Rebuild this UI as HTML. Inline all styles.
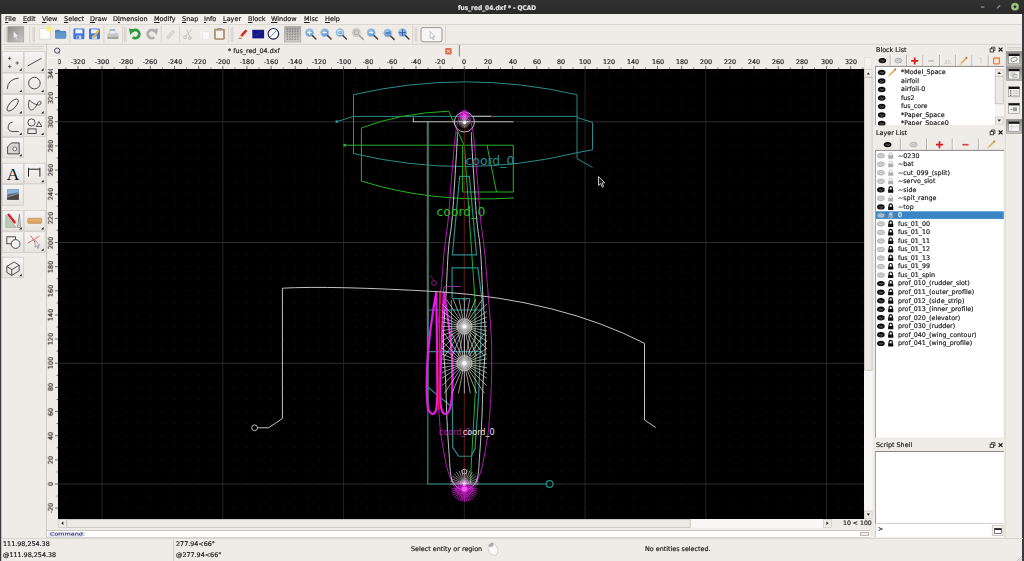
<!DOCTYPE html>
<html><head><meta charset="utf-8"><title>fus_red_04.dxf * - QCAD</title>
<style>
html,body{margin:0;padding:0;}
.t,.rl,.rv{will-change:transform;-webkit-text-stroke:0.18px currentColor;}
body{width:1024px;height:561px;overflow:hidden;background:#efebe7;position:relative;font-family:"DejaVu Sans","Liberation Sans",sans-serif;font-size:6.5px;color:#1a1a1a;line-height:1;}
.a{position:absolute;}
.t{position:absolute;white-space:nowrap;}
#title{left:0;top:0;width:1024px;height:13.6px;background:linear-gradient(#323232,#2a2a2a);}
#title .t{color:#e4e4e4;font-family:"DejaVu Sans Condensed","DejaVu Sans","Liberation Sans",sans-serif;font-weight:bold;font-size:6.5px;top:4.6px;left:457.8px;}
#menu .t{top:15.5px;font-size:6.5px;color:#1a1a1a;}
u{text-decoration:underline;text-underline-offset:0.6px;text-decoration-thickness:0.5px;}
.sep{position:absolute;width:1px;background:#cfcac4;border-right:1px solid #fbfaf9;}
.rl{position:absolute;font-size:6.4px;color:#222;white-space:nowrap;transform:translateX(-50%);top:58.5px;}
.rv{position:absolute;font-size:6.4px;color:#222;white-space:nowrap;left:51.2px;transform:translate(-50%,-50%) rotate(-90deg);}
.row{position:absolute;left:897px;font-size:6.5px;white-space:nowrap;}
</style></head><body>
<!-- TITLE BAR -->
<div id="title" class="a"><div class="t">fus_red_04.dxf * - QCAD</div>
<svg class="a" style="left:930px;top:0" width="94" height="14" viewBox="930 0 94 14">
<rect x="981" y="6.6" width="3.4" height="0.9" fill="#b8b8b8"/>
<path d="M997 8.4L1000.2 5.2" stroke="#8e8e8e" stroke-width="1.3" fill="none"/>
<circle cx="1015" cy="6.7" r="3.9" fill="#8dad68"/><circle cx="1015" cy="6.7" r="2.7" fill="none" stroke="#a9c58a" stroke-width="1.1"/>
<circle cx="1015" cy="6.7" r="1.2" fill="#2c2c2c"/>
</svg></div>
<div class="a" style="left:0;top:14px;width:1px;height:547px;background:#3a3a3a"></div><div class="a" style="left:1px;top:14px;width:1px;height:547px;background:#c2bfbb"></div>
<div class="a" style="left:1022px;top:14px;width:2px;height:31px;background:#3a3a3a"></div>
<!-- MENU -->
<div class="a" style="left:2px;top:14px;width:1020px;height:10.3px;background:#f2f0ed;border-bottom:0.6px solid #dad6d0"></div>
<div id="menu">
<div class="t" style="left:5px"><u>F</u>ile</div>
<div class="t" style="left:23px"><u>E</u>dit</div>
<div class="t" style="left:41.5px"><u>V</u>iew</div>
<div class="t" style="left:63.5px"><u>S</u>elect</div>
<div class="t" style="left:89.5px"><u>D</u>raw</div>
<div class="t" style="left:113px">D<u>i</u>mension</div>
<div class="t" style="left:153.5px"><u>M</u>odify</div>
<div class="t" style="left:181.5px"><u>S</u>nap</div>
<div class="t" style="left:204px"><u>I</u>nfo</div>
<div class="t" style="left:222.5px"><u>L</u>ayer</div>
<div class="t" style="left:247.5px"><u>B</u>lock</div>
<div class="t" style="left:271px"><u>W</u>indow</div>
<div class="t" style="left:303.5px"><u>M</u>isc</div>
<div class="t" style="left:324.5px"><u>H</u>elp</div>
</div>
<!-- TOOLBAR -->
<svg id="toolbar" class="a" style="left:0;top:24px" width="1024" height="21" viewBox="0 24 1024 21">
<defs>
<linearGradient id="pr" x1="0" y1="0" x2="1" y2="1"><stop offset="0" stop-color="#8c8a88"/><stop offset="1" stop-color="#cbc8c5"/></linearGradient>
<linearGradient id="pg" x1="0" y1="0" x2="0" y2="1"><stop offset="0" stop-color="#a8a6a3"/><stop offset="1" stop-color="#d2cfcb"/></linearGradient>
<radialGradient id="lens" cx="0.4" cy="0.35" r="0.7"><stop offset="0" stop-color="#a9cdf2"/><stop offset="1" stop-color="#4b86cc"/></radialGradient>
<g id="mag"><circle cx="0" cy="0" r="3.9" fill="url(#lens)" stroke="#a9bfd8" stroke-width="1"/><path d="M3 3L6.4 6.4" stroke="#454545" stroke-width="1.5" stroke-linecap="round"/></g>
<g id="hdl"><path d="M0 27V42M1.6 27V42" stroke="#c9c4be" stroke-width="0.7"/></g>
</defs>
<path d="M1.5 44.3H1022.5" stroke="#d6d2cc" stroke-width="1"/>
<use href="#hdl" x="5"/>
<rect x="7.8" y="26.7" width="16" height="15.3" fill="url(#pr)" stroke="#9a9794" stroke-width="0.6"/>
<path d="M13.6 31.2V38.4L15.3 36.9L16.5 39.6L17.5 39.1L16.3 36.5L18.4 36.4Z" fill="#f0f0f0" stroke="#b4b2b0" stroke-width="0.4"/>
<path d="M29.7 26V43M69.8 26V43M103.9 26V43M122.6 26V43M161.2 26V43M179.7 26V43M228.6 26V43M412.7 26V43M445.5 26V43" stroke="#d5d0ca" stroke-width="0.9"/>
<use href="#hdl" x="33"/>
<!-- new -->
<circle cx="49" cy="29.5" r="3.2" fill="#f2ef7a"/>
<path d="M39.6 28.6H47L50.4 31V39.2H39.6Z" fill="#fbfbf8" stroke="#d2d0c6" stroke-width="0.7"/>
<circle cx="48.6" cy="29.6" r="2" fill="#f6f38a" opacity="0.9"/>
<!-- open -->
<path d="M55 31.2Q55 29.8 56.4 29.8H59.6L60.8 31H65Q66.2 31 66.2 32.2V37.2Q66.2 38.5 64.8 38.5H56.4Q55 38.5 55 37.2Z" fill="#4f8abf"/>
<path d="M55 33Q60 31.6 66.2 32.6V37.2Q66.2 38.5 64.8 38.5H56.4Q55 38.5 55 37.2Z" fill="#5c98cb"/>
<!-- save -->
<rect x="73.4" y="28.6" width="11" height="10.6" rx="1.2" fill="#3f74d8"/>
<rect x="75.4" y="29.4" width="7" height="4" fill="#eef2fb"/>
<rect x="76.4" y="35.6" width="5" height="3.6" fill="#c9d6f2"/><rect x="77.2" y="36.2" width="1.6" height="2.6" fill="#3f74d8"/>
<!-- save as -->
<rect x="89" y="28.6" width="11" height="10.6" rx="1.2" fill="#3f74d8"/>
<rect x="91" y="29.4" width="7" height="4" fill="#eef2fb"/>
<rect x="92" y="35.6" width="5" height="3.6" fill="#c9d6f2"/>
<path d="M92.5 37L98.6 29.4L100 30.5L94 38Z" fill="#e8b84a" stroke="#b0883a" stroke-width="0.3"/>
<!-- print -->
<path d="M109.6 29H115.2V33H109.6Z" fill="#9fb6d8"/>
<path d="M107.4 34.5Q107.4 33 109 33H116.6Q118.4 33 118.4 34.5V37.6H107.4Z" fill="#c6c5c2"/>
<rect x="107.4" y="37" width="11" height="2" fill="#a3a29f"/>
<rect x="110" y="31" width="5" height="2.6" fill="#e9eef6"/>
<use href="#hdl" x="124.4"/>
<!-- undo -->
<path d="M132.6 37.2A4.1 4.1 0 1 0 132.3 31.2" fill="none" stroke="#2f9c3c" stroke-width="2.8"/>
<path d="M129 28.6L135.4 29.4L130.2 35Z" fill="#2f9c3c"/>
<!-- redo -->
<path d="M154.4 37.2A4.1 4.1 0 1 1 154.7 31.2" fill="none" stroke="#b0afad" stroke-width="2.8"/>
<path d="M158 28.6L151.6 29.4L156.8 35Z" fill="#b0afad"/>
<!-- edit (disabled) -->
<path d="M166.4 37.4L172.6 30.2L174.6 31.8L168.4 38.8Z" fill="#dddbd8" stroke="#b8b6b3" stroke-width="0.6"/>
<!-- cut disabled -->
<path d="M186 36L191.6 29.6M189.4 36.6L187.2 30" stroke="#bdbbb8" stroke-width="0.8" fill="none"/>
<circle cx="185.2" cy="37.4" r="1.4" fill="none" stroke="#b4b2af" stroke-width="0.8"/><circle cx="190" cy="38" r="1.4" fill="none" stroke="#b4b2af" stroke-width="0.8"/>
<!-- copy disabled -->
<rect x="199" y="30" width="6.5" height="8" fill="#f4f2ef" stroke="#e2dfdb" stroke-width="0.5"/><rect x="202.5" y="31.6" width="6.8" height="8" fill="#f8f7f5" stroke="#e2dfdb" stroke-width="0.5"/>
<!-- paste -->
<rect x="214.4" y="29" width="10.2" height="10.4" rx="0.8" fill="#b99a72" stroke="#8e7454" stroke-width="0.5"/>
<rect x="216" y="30.6" width="7" height="7.6" fill="#f3f2ee"/>
<rect x="217.4" y="28" width="4.2" height="2.2" rx="0.6" fill="#9a9894"/>
<use href="#hdl" x="231.2"/>
<!-- red pencil -->
<path d="M239.4 37.8L240.4 35L245.4 29.4L247.4 31L242.4 36.8Z" fill="#d82a2a"/>
<path d="M239 38.4L240.4 35L242.4 36.8Z" fill="#f0d0a0"/>
<path d="M238.6 38.6H242" stroke="#803030" stroke-width="0.5"/>
<!-- blue rect -->
<rect x="252.3" y="29.8" width="11.8" height="8.6" fill="#17178c"/>
<path d="M254 36L262 32" stroke="#4a4ab8" stroke-width="0.5" stroke-dasharray="1 1"/>
<!-- circle slash -->
<circle cx="273.4" cy="33.8" r="5.3" fill="#fbfbfb" stroke="#1b1b4a" stroke-width="1.1"/>
<path d="M270 37.2L276.8 30.4" stroke="#6a74c8" stroke-width="0.9"/>
<!-- grid pressed -->
<rect x="284.7" y="26.7" width="16.1" height="15.3" fill="url(#pg)" stroke="#9a9794" stroke-width="0.6"/>
<path d="M286.5 29.2H299.4M286.5 31.8H299.4M286.5 34.4H299.4M286.5 37H299.4M286.5 39.6H299.4M287.6 28V40.8M290.2 28V40.8M292.8 28V40.8M295.4 28V40.8M298 28V40.8" stroke="#7d7b79" stroke-width="0.7" stroke-dasharray="1.3 1.3"/>
<!-- zoom icons -->
<use href="#mag" x="309.5" y="32.6"/><rect x="307.4" y="32.1" width="4.2" height="1.1" fill="#fff"/><rect x="309" y="30.5" width="1.1" height="4.2" fill="#fff"/>
<use href="#mag" x="324.7" y="32.6"/><rect x="322.6" y="32.1" width="4.2" height="1.1" fill="#fff"/>
<use href="#mag" x="340" y="32.6"/><rect x="337.8" y="30.6" width="4.4" height="3.8" fill="none" stroke="#eaf2fb" stroke-width="0.7"/>
<g opacity="0.55"><circle cx="356.4" cy="32.6" r="4" fill="#b9b7b4" stroke="#a3a19e" stroke-width="0.9"/><path d="M359.4 35.6L363.2 39.4" stroke="#6a6a6a" stroke-width="1.7" stroke-linecap="round"/><rect x="354.4" y="30.8" width="4" height="3.6" fill="none" stroke="#777" stroke-width="0.7"/></g>
<use href="#mag" x="371.2" y="32.6"/><path d="M369 32.6H373L371.6 31.2M373 32.6L371.6 34" stroke="#fff" stroke-width="0.8" fill="none"/>
<rect x="382.8" y="28" width="9.4" height="8.4" fill="#f7f7f7" stroke="#dcdad6" stroke-width="0.5"/>
<use href="#mag" x="387.7" y="33"/><rect x="385.6" y="32" width="4.2" height="2" fill="#3d72b8" opacity="0.7"/>
<use href="#mag" x="402.5" y="32.6"/><path d="M402.5 29.2V36M399.1 32.6H405.9" stroke="#2d5fa8" stroke-width="0.9"/>
<use href="#hdl" x="415.2"/>
<rect x="421" y="27.6" width="21" height="14.2" rx="2" fill="#f7f6f4" stroke="#8f8d8a" stroke-width="0.9"/>
<path d="M430.2 31.4V38.6L431.9 37.1L433.1 39.8L434.1 39.3L432.9 36.7L435 36.6Z" fill="#fdfdfd" stroke="#8a8a8a" stroke-width="0.5"/>
</svg>
<!-- LEFT TOOLS -->
<svg id="ltools" class="a" style="left:0;top:44px" width="47" height="494" viewBox="0 44 47 494">
<defs><linearGradient id="bt" x1="0" y1="0" x2="0" y2="1"><stop offset="0" stop-color="#f6f5f3"/><stop offset="1" stop-color="#e7e4e0"/></linearGradient></defs>
<path d="M4 46.6H44M4 48.8H44" stroke="#cdc8c2" stroke-width="0.7"/>
<rect x="2.2" y="51.7" width="21.1" height="20.6" fill="url(#bt)" stroke="#cbc7c1" stroke-width="0.7"/>
<path d="M21.7 68.30000000000001V70.70000000000002H19.3Z" fill="#111"/>
<path d="M9.7 56.7v3.4m-1.7 -1.7h3.4M17.2 61.300000000000004v3.4m-1.7 -1.7h3.4M9.7 64.9v3.4m-1.7 -1.7h3.4" stroke="#333" stroke-width="0.7" fill="none"/>
<rect x="24.1" y="51.7" width="21.1" height="20.6" fill="url(#bt)" stroke="#cbc7c1" stroke-width="0.7"/>
<path d="M43.6 68.30000000000001V70.70000000000002H41.2Z" fill="#111"/>
<path d="M27.700000000000003 65.9L41.5 58.300000000000004" stroke="#3c3c3c" stroke-width="0.9" fill="none"/>
<rect x="2.2" y="73.1" width="21.1" height="20.6" fill="url(#bt)" stroke="#cbc7c1" stroke-width="0.7"/>
<path d="M21.7 89.69999999999999V92.1H19.3Z" fill="#111"/>
<path d="M7.2 89.1Q7.7 79.1 18.7 78.1" stroke="#3c3c3c" stroke-width="0.9" fill="none"/>
<rect x="24.1" y="73.1" width="21.1" height="20.6" fill="url(#bt)" stroke="#cbc7c1" stroke-width="0.7"/>
<path d="M43.6 89.69999999999999V92.1H41.2Z" fill="#111"/>
<circle cx="34.400000000000006" cy="83.1" r="5.8" stroke="#3c3c3c" stroke-width="0.9" fill="none"/>
<rect x="2.2" y="94.5" width="21.1" height="20.6" fill="url(#bt)" stroke="#cbc7c1" stroke-width="0.7"/>
<path d="M21.7 111.1V113.5H19.3Z" fill="#111"/>
<ellipse cx="12.7" cy="105.0" rx="7.6" ry="3.2" transform="rotate(-48 12.7 105.0)" stroke="#3c3c3c" stroke-width="0.9" fill="none"/>
<rect x="24.1" y="94.5" width="21.1" height="20.6" fill="url(#bt)" stroke="#cbc7c1" stroke-width="0.7"/>
<path d="M43.6 111.1V113.5H41.2Z" fill="#111"/>
<path d="M29.3 99.9C26.5 110.5 32.1 113.5 36.7 105.1C38.7 99.5 42.1 100.5 40.7 104.1C39.1 106.5 32.1 103.5 29.3 99.9Z" stroke="#3c3c3c" stroke-width="0.9" fill="none"/>
<rect x="2.2" y="115.9" width="21.1" height="20.6" fill="url(#bt)" stroke="#cbc7c1" stroke-width="0.7"/>
<path d="M21.7 132.5V134.9H19.3Z" fill="#111"/>
<path d="M8.2 128.3Q7.6000000000000005 123.10000000000001 12.600000000000001 122.10000000000001M8.2 128.3Q8.600000000000001 131.5 12.2 131.5H18.8" stroke="#3c3c3c" stroke-width="0.9" fill="none"/>
<rect x="24.1" y="115.9" width="21.1" height="20.6" fill="url(#bt)" stroke="#cbc7c1" stroke-width="0.7"/>
<path d="M43.6 132.5V134.9H41.2Z" fill="#111"/>
<circle cx="31.5" cy="122.5" r="3.6" stroke="#3c3c3c" stroke-width="0.9" fill="none"/><path d="M36.3 126.5L38.900000000000006 121.5L41.7 126.5Z" stroke="#3c3c3c" stroke-width="0.9" fill="none"/><rect x="27.900000000000002" y="128.9" width="8.2" height="4.6" stroke="#3c3c3c" stroke-width="0.9" fill="none"/>
<rect x="2.2" y="137.3" width="21.1" height="20.6" fill="url(#bt)" stroke="#cbc7c1" stroke-width="0.7"/>
<path d="M21.7 153.9V156.3H19.3Z" fill="#111"/>
<path d="M7.6000000000000005 153.9V146.9L11.399999999999999 142.9H19.2V153.9Z" fill="#d8d6d3" stroke="#3c3c3c" stroke-width="0.9"/><circle cx="14.8" cy="148.9" r="2" fill="#f2f0ee" stroke="#3c3c3c" stroke-width="0.7"/>
<rect x="2.2" y="163.2" width="21.1" height="20.6" fill="url(#bt)" stroke="#cbc7c1" stroke-width="0.7"/>
<text x="13.0" y="179.79999999999998" text-anchor="middle" font-family="Liberation Serif,DejaVu Serif,serif" font-size="17.5" fill="#111">A</text>
<rect x="24.1" y="163.2" width="21.1" height="20.6" fill="url(#bt)" stroke="#cbc7c1" stroke-width="0.7"/>
<path d="M43.6 179.79999999999998V182.2H41.2Z" fill="#111"/>
<path d="M28.5 176.6V167.79999999999998M39.900000000000006 176.6V167.79999999999998M28.5 169.2H39.900000000000006" stroke="#222" stroke-width="1" fill="none"/>
<rect x="2.2" y="184.6" width="21.1" height="20.6" fill="url(#bt)" stroke="#cbc7c1" stroke-width="0.7"/>
<rect x="7.2" y="189.2" width="11.6" height="10.6" fill="#5a6f8c"/><path d="M7.2 189.2H18.8V192.2L7.2 194.2Z" fill="#8fb4dc"/><path d="M7.2 199.79999999999998V196.6L18.8 193.6V199.79999999999998Z" fill="#4a4640"/><path d="M7.2 197.2L18.8 193.4" stroke="#c8b8a0" stroke-width="0.7"/>
<rect x="2.2" y="210.4" width="21.1" height="20.6" fill="url(#bt)" stroke="#cbc7c1" stroke-width="0.7"/>
<path d="M21.7 227.0V229.4H19.3Z" fill="#111"/>
<path d="M5.800000000000001 227.4V214.8L16.2 227.4Z" fill="#b9cbb9" stroke="#8a9a8a" stroke-width="0.5"/><path d="M17.4 227.4L19.4 214.0L20.599999999999998 227.4Z" fill="#d8d6d3" stroke="#555" stroke-width="0.5"/><path d="M8.600000000000001 214.8L14.600000000000001 222.20000000000002" stroke="#d81f1f" stroke-width="2.4" stroke-linecap="round"/>
<rect x="24.1" y="210.4" width="21.1" height="20.6" fill="url(#bt)" stroke="#cbc7c1" stroke-width="0.7"/>
<path d="M43.6 227.0V229.4H41.2Z" fill="#111"/>
<rect x="27.700000000000003" y="218.20000000000002" width="14" height="5.2" rx="0.8" fill="#d9a25e" stroke="#b98444" stroke-width="0.5"/><path d="M28.1 220.0H41.3" stroke="#ecc48c" stroke-width="0.8"/>
<rect x="2.2" y="231.8" width="21.1" height="20.6" fill="url(#bt)" stroke="#cbc7c1" stroke-width="0.7"/>
<rect x="6.8" y="236.8" width="8.6" height="7" stroke="#3c3c3c" stroke-width="0.9" fill="none"/><circle cx="15.600000000000001" cy="244.0" r="4.4" fill="#f4f3f1" stroke="#3c3c3c" stroke-width="0.9"/>
<rect x="24.1" y="231.8" width="21.1" height="20.6" fill="url(#bt)" stroke="#cbc7c1" stroke-width="0.7"/>
<path d="M43.6 248.4V250.8H41.2Z" fill="#111"/>
<path d="M27.700000000000003 243.20000000000002L39.5 236.20000000000002M30.700000000000003 235.60000000000002L36.7 244.8" stroke="#d85a5a" stroke-width="0.9" fill="none"/><path d="M35.1 240.4V247.20000000000002L36.7 245.8L37.900000000000006 248.4L38.900000000000006 247.9L37.7 245.4L39.7 245.20000000000002Z" fill="#f4f4f4" stroke="#6a6a6a" stroke-width="0.6"/>
<rect x="2.2" y="257.2" width="21.1" height="20.6" fill="url(#bt)" stroke="#cbc7c1" stroke-width="0.7"/>
<path d="M21.7 273.8V276.2H19.3Z" fill="#111"/>
<path d="M6.8 266.4L14.2 262.0L19.2 265.2L11.8 269.59999999999997ZM6.8 266.4V272.4L11.8 275.4V269.59999999999997M19.2 265.2V270.8L11.8 275.4" stroke="#3c3c3c" stroke-width="0.9" fill="none"/>
</svg>
<!-- TAB BAR / RULERS / SCROLLBARS -->
<div class="a" style="left:46px;top:44px;width:1px;height:494px;background:#cfcac4"></div>
<svg class="a" style="left:47px;top:44px" width="420" height="13" viewBox="47 44 420 13">
<circle cx="57.2" cy="50.6" r="2.6" fill="#e6e6ee" stroke="#4a4a5a" stroke-width="1"/><path d="M58.6 52L60 53.4" stroke="#4a4a5a" stroke-width="0.9"/>
<rect x="445.2" y="47.9" width="6.5" height="6.6" rx="1.2" fill="#dc6d4c"/><path d="M447.1 49.9L449.8 52.6M449.8 49.9L447.1 52.6" stroke="#fbeee8" stroke-width="1"/>
<path d="M459.4 45V56.6" stroke="#6a6865" stroke-width="0.8"/>
</svg>
<div class="t" style="left:227.5px;top:47.6px;font-size:6.37px;color:#222">* fus_red_04.dxf</div>
<div class="a" style="left:58px;top:57px;width:806px;height:12px;overflow:hidden">
<div class="a" style="left:-58px;top:-57px">
<div class="rl" style="left:53.8px">-340</div>
<div class="rl" style="left:77.9px">-320</div>
<div class="rl" style="left:102.1px">-300</div>
<div class="rl" style="left:126.2px">-280</div>
<div class="rl" style="left:150.4px">-260</div>
<div class="rl" style="left:174.5px">-240</div>
<div class="rl" style="left:198.7px">-220</div>
<div class="rl" style="left:222.8px">-200</div>
<div class="rl" style="left:247.0px">-180</div>
<div class="rl" style="left:271.1px">-160</div>
<div class="rl" style="left:295.2px">-140</div>
<div class="rl" style="left:319.4px">-120</div>
<div class="rl" style="left:343.6px">-100</div>
<div class="rl" style="left:367.7px">-80</div>
<div class="rl" style="left:391.9px">-60</div>
<div class="rl" style="left:416.0px">-40</div>
<div class="rl" style="left:440.2px">-20</div>
<div class="rl" style="left:464.3px">0</div>
<div class="rl" style="left:488.4px">20</div>
<div class="rl" style="left:512.6px">40</div>
<div class="rl" style="left:536.8px">60</div>
<div class="rl" style="left:560.9px">80</div>
<div class="rl" style="left:585.0px">100</div>
<div class="rl" style="left:609.2px">120</div>
<div class="rl" style="left:633.4px">140</div>
<div class="rl" style="left:657.5px">160</div>
<div class="rl" style="left:681.6px">180</div>
<div class="rl" style="left:705.8px">200</div>
<div class="rl" style="left:730.0px">220</div>
<div class="rl" style="left:754.1px">240</div>
<div class="rl" style="left:778.2px">260</div>
<div class="rl" style="left:802.4px">280</div>
<div class="rl" style="left:826.5px">300</div>
<div class="rl" style="left:850.7px">320</div>
<div class="rl" style="left:874.9px">340</div>
</div></div>
<svg class="a" style="left:47px;top:57px" width="826" height="472" viewBox="47 57 826 472"><path d="M65.82 67.5V69M77.90 66V69M89.98 67.5V69M102.05 66V69M114.12 67.5V69M126.20 66V69M138.28 67.5V69M150.35 66V69M162.43 67.5V69M174.50 66V69M186.57 67.5V69M198.65 66V69M210.72 67.5V69M222.80 66V69M234.88 67.5V69M246.95 66V69M259.02 67.5V69M271.10 66V69M283.18 67.5V69M295.25 66V69M307.33 67.5V69M319.40 66V69M331.48 67.5V69M343.55 66V69M355.62 67.5V69M367.70 66V69M379.77 67.5V69M391.85 66V69M403.93 67.5V69M416.00 66V69M428.07 67.5V69M440.15 66V69M452.23 67.5V69M464.30 66V69M476.38 67.5V69M488.45 66V69M500.53 67.5V69M512.60 66V69M524.67 67.5V69M536.75 66V69M548.83 67.5V69M560.90 66V69M572.98 67.5V69M585.05 66V69M597.12 67.5V69M609.20 66V69M621.27 67.5V69M633.35 66V69M645.42 67.5V69M657.50 66V69M669.58 67.5V69M681.65 66V69M693.73 67.5V69M705.80 66V69M717.88 67.5V69M729.95 66V69M742.03 67.5V69M754.10 66V69M766.17 67.5V69M778.25 66V69M790.33 67.5V69M802.40 66V69M814.48 67.5V69M826.55 66V69M838.62 67.5V69M850.70 66V69M862.78 67.5V69M55 508.15H58M56.5 496.07H58M55 484.00H58M56.5 471.93H58M55 459.85H58M56.5 447.77H58M55 435.70H58M56.5 423.62H58M55 411.55H58M56.5 399.48H58M55 387.40H58M56.5 375.32H58M55 363.25H58M56.5 351.18H58M55 339.10H58M56.5 327.02H58M55 314.95H58M56.5 302.88H58M55 290.80H58M56.5 278.73H58M55 266.65H58M56.5 254.57H58M55 242.50H58M56.5 230.42H58M55 218.35H58M56.5 206.27H58M55 194.20H58M56.5 182.12H58M55 170.05H58M56.5 157.98H58M55 145.90H58M56.5 133.82H58M55 121.75H58M56.5 109.68H58M55 97.60H58M56.5 85.52H58M55 73.45H58" stroke="#333" stroke-width="0.7" fill="none"/>
<path d="M47.5 69V57.5H58" stroke="#fbfaf8" stroke-width="1" fill="none"/><path d="M58 57.5V69" stroke="#dcd8d2" stroke-width="0.6" fill="none"/>
<rect x="864.3" y="69" width="8.4" height="450" fill="#f8f7f5"/>
<rect x="864.6" y="57.6" width="7.2" height="11.4" fill="#f3f1ee" stroke="#dedad4" stroke-width="0.5"/>
<rect x="864.5" y="69.6" width="7.6" height="7.4" fill="#eeebe7" stroke="#c4c0ba" stroke-width="0.6"/><path d="M866.6 74.6H870L868.3 72.4Z" fill="#222"/>
<rect x="864.5" y="77.6" width="7.6" height="292.6" fill="#edeae6" stroke="#bcb8b2" stroke-width="0.7"/>
<rect x="864.5" y="511" width="7.6" height="7.4" fill="#eeebe7" stroke="#c4c0ba" stroke-width="0.6"/><path d="M866.6 513.6H870L868.3 515.8Z" fill="#222"/>
<rect x="58" y="519" width="774" height="9" fill="#f8f7f5"/>
<rect x="58.2" y="519.4" width="8" height="8" fill="#eeebe7" stroke="#c4c0ba" stroke-width="0.6"/><path d="M63.4 521.6V525L61.2 523.3Z" fill="#222"/>
<rect x="66.8" y="519.4" width="623.4" height="8" fill="#edeae6" stroke="#bcb8b2" stroke-width="0.7"/>
<rect x="823.4" y="519.4" width="8" height="8" fill="#eeebe7" stroke="#c4c0ba" stroke-width="0.6"/><path d="M826.4 521.6V525L828.6 523.3Z" fill="#222"/>
</svg>
<div class="a" style="left:47px;top:69px;width:11px;height:449.5px;overflow:hidden"><div class="a" style="left:-47px;top:-69px">
<div class="rv" style="top:508.1px">-20</div>
<div class="rv" style="top:484.0px">0</div>
<div class="rv" style="top:459.9px">20</div>
<div class="rv" style="top:435.7px">40</div>
<div class="rv" style="top:411.6px">60</div>
<div class="rv" style="top:387.4px">80</div>
<div class="rv" style="top:363.2px">100</div>
<div class="rv" style="top:339.1px">120</div>
<div class="rv" style="top:314.9px">140</div>
<div class="rv" style="top:290.8px">160</div>
<div class="rv" style="top:266.6px">180</div>
<div class="rv" style="top:242.5px">200</div>
<div class="rv" style="top:218.4px">220</div>
<div class="rv" style="top:194.2px">240</div>
<div class="rv" style="top:170.1px">260</div>
<div class="rv" style="top:145.9px">280</div>
<div class="rv" style="top:121.8px">300</div>
<div class="rv" style="top:97.6px">320</div>
<div class="rv" style="top:73.4px">340</div>
</div></div>
<div class="t" style="left:843px;top:520.4px;font-size:6.2px;color:#222">10 &lt; 100</div>
<div class="a" style="left:47px;top:529.5px;width:823px;height:8px;background:#fff;border-top:1px solid #c9c5bf;border-bottom:1px solid #d8d4ce;box-sizing:border-box"></div>
<div class="a" style="left:48px;top:531.6px;width:35px;height:5px;background:#e6e8f4"></div>
<div class="t" style="left:49.6px;top:531.2px;font-size:6.4px;color:#2a2a70;transform-origin:0 50%;transform:scaleY(0.72)">Command:</div>
<div class="a" style="left:860px;top:531.5px;width:9px;height:4.5px;background:#efebe7;border:0.6px solid #bdb9b3;box-sizing:border-box"></div>
<svg class="a" style="left:58px;top:69px" width="806" height="449.5" viewBox="58 69 806 449.5">
<rect x="58" y="69" width="806" height="450" fill="#000"/>
<defs><pattern id="gd" x="463.700" y="483.400" width="12.0750" height="12.0750" patternUnits="userSpaceOnUse"><rect x="0" y="0" width="1.2" height="1.2" fill="#181818"/></pattern></defs>
<rect x="58" y="69" width="806" height="450" fill="url(#gd)"/>
<path d="M102.05 69V519M222.80 69V519M343.55 69V519M464.30 69V519M585.05 69V519M705.80 69V519M826.55 69V519" stroke="#232323" stroke-width="1" fill="none"/>
<path d="M58 484.00H864M58 363.25H864M58 242.50H864M58 121.75H864" stroke="#2c2c2c" stroke-width="1" fill="none"/>
<g fill="none" stroke="#2a8c8c" stroke-width="1">
<path d="M353.5 153.5V94.7Q464.5 69 577 94.7V158.6L592.5 167.5"/>
<path d="M353.5 153.5Q464.5 180 577 152.7L592.5 149.8V122.4L577 117.5"/>
<path d="M337 121.6L353.5 116.4H577"/>
<rect x="335.5" y="120.3" width="2.6" height="2.6" fill="#2a8c8c" stroke="none"/>
</g>
<g fill="none" stroke="#22b422" stroke-width="1">
<path d="M464 145L448.7 111.2Q400 113 361.4 128V181Q430 203 514 198"/>
<path d="M344.7 145.2H513.3V192H462.6V145.2"/>
<path d="M487 145.2L496.5 192"/>
<path d="M464.4 145Q468 200 475 300L475.2 395L471.2 465L470.6 484" />
<rect x="343.4" y="143.9" width="2.6" height="2.6" fill="#22b422" stroke="none"/>
</g>
<path d="M427.3 121.8V410" stroke="#a86878" stroke-width="1" fill="none"/><path d="M428.4 121.8V410" stroke="#2a7a5a" stroke-width="1" fill="none"/>
<path d="M464.3 122V484" stroke="#6a1010" stroke-width="0.8" fill="none"/>
<g fill="none" stroke="#2a8c8c" stroke-width="1.2">
<path d="M427.8 410V484H546"/><circle cx="549.6" cy="484" r="3.4"/>
<path d="M427.8 387L450 405.5"/>
<path d="M459.7 176.4H469.4L476.5 254.8H452.4Z"/>
<path d="M452.1 298.6V267.9H477.9L482 300" />
<path d="M452.1 298.6H470"/>
<path d="M427.8 310H482.3M427.8 351.6H482M427.8 351.6V310"/>
<path d="M451.4 300L452.75 447.5L458.75 456.25H471.25L475 448.75L478.75 395L482 300"/>
</g>
<path d="M413.3 117.6V121.8H513.3" stroke="#b8b8b8" stroke-width="1.1" fill="none"/>
<path d="M473 116.3H491" stroke="#b8b8b8" stroke-width="1.1" fill="none"/>
<circle cx="492" cy="116.5" r="1.1" fill="#b02828"/>
<path d="M464.4 110.0L464.2 110.1L463.9 110.3L463.5 110.4L463.1 110.6L462.6 110.9L462.2 111.2L461.8 111.5L461.4 112.0L461.0 112.6L460.7 113.2L460.4 113.9L460.0 114.7L459.7 115.5L459.4 116.3L459.1 117.2L458.8 118.0L458.6 118.8L458.3 119.5L458.2 120.2L458.0 120.9L457.8 121.7L457.6 122.7L457.4 123.7L457.2 125.0L456.9 126.3L456.7 127.6L456.4 128.9L456.1 130.4L455.8 132.2L455.5 134.3L455.2 136.9L454.8 140.0L454.4 143.8L454.0 148.2L453.6 153.2L453.2 158.4L452.7 163.9L452.3 169.4L451.8 174.8L451.4 180.0L451.0 185.1L450.6 190.2L450.2 195.4L449.8 200.6L449.4 205.7L449.0 210.7L448.5 215.5L448.1 220.0L447.7 224.1L447.2 227.9L446.7 231.3L446.3 234.7L445.8 238.1L445.3 241.7L444.9 245.6L444.4 250.0L443.9 254.9L443.4 260.2L443.0 265.8L442.5 271.6L442.0 277.5L441.5 283.4L441.0 289.3L440.6 295.0L440.2 300.7L439.7 306.4L439.2 312.1L438.8 317.8L438.3 323.5L438.0 329.1L437.6 334.6L437.4 340.0L437.2 345.3L437.1 350.6L437.1 355.8L437.1 360.9L437.1 366.0L437.1 370.8L437.2 375.5L437.3 380.0L437.4 384.3L437.6 388.4L437.7 392.3L437.9 396.1L438.1 399.8L438.4 403.3L438.6 406.7L438.8 410.0L439.0 413.1L439.2 416.0L439.4 418.8L439.6 421.4L439.8 424.0L440.0 426.6L440.3 429.3L440.6 432.0L441.0 434.9L441.4 437.9L441.9 440.9L442.4 443.9L442.9 446.9L443.4 449.8L443.9 452.5L444.4 455.0L444.8 457.3L445.2 459.3L445.5 461.2L445.9 463.0L446.2 464.7L446.6 466.4L447.1 468.2L447.6 470.0L448.2 471.9L448.9 473.9L449.6 475.9L450.4 477.9L451.2 479.9L451.9 481.7L452.7 483.5L453.4 485.0L454.1 486.4L454.7 487.6L455.4 488.7L456.0 489.7L456.7 490.6L457.3 491.5L457.9 492.3L458.4 493.0L458.9 493.7L459.4 494.2L459.9 494.8L460.3 495.2L460.7 495.6L461.1 495.9L461.5 496.2L461.9 496.5L462.3 496.8L462.7 496.9L463.0 497.1L463.4 497.2L463.7 497.3L464.0 497.4L464.2 497.4L464.4 497.5L464.4 497.5L464.6 497.4L464.8 497.4L465.1 497.3L465.4 497.2L465.8 497.1L466.1 496.9L466.5 496.8L466.9 496.5L467.3 496.2L467.7 495.9L468.1 495.6L468.5 495.2L468.9 494.8L469.4 494.2L469.9 493.7L470.4 493.0L470.9 492.3L471.5 491.5L472.1 490.6L472.8 489.7L473.4 488.7L474.1 487.6L474.7 486.4L475.4 485.0L476.1 483.5L476.9 481.7L477.6 479.9L478.4 477.9L479.2 475.9L479.9 473.9L480.6 471.9L481.2 470.0L481.7 468.2L482.2 466.4L482.6 464.7L482.9 463.0L483.3 461.2L483.6 459.3L484.0 457.3L484.4 455.0L484.9 452.5L485.4 449.8L485.9 446.9L486.4 443.9L486.9 440.9L487.4 437.9L487.8 434.9L488.2 432.0L488.5 429.3L488.8 426.6L489.0 424.0L489.2 421.4L489.4 418.8L489.6 416.0L489.8 413.1L490.0 410.0L490.2 406.7L490.4 403.3L490.7 399.8L490.9 396.1L491.1 392.3L491.2 388.4L491.4 384.3L491.5 380.0L491.6 375.5L491.7 370.8L491.7 366.0L491.7 360.9L491.7 355.8L491.7 350.6L491.6 345.3L491.4 340.0L491.2 334.6L490.8 329.1L490.5 323.5L490.0 317.8L489.6 312.1L489.1 306.4L488.6 300.7L488.2 295.0L487.8 289.3L487.3 283.4L486.8 277.5L486.3 271.6L485.8 265.8L485.4 260.2L484.9 254.9L484.4 250.0L483.9 245.6L483.5 241.7L483.0 238.1L482.5 234.7L482.1 231.3L481.6 227.9L481.1 224.1L480.7 220.0L480.3 215.5L479.8 210.7L479.4 205.7L479.0 200.6L478.6 195.4L478.2 190.2L477.8 185.1L477.4 180.0L477.0 174.8L476.5 169.4L476.1 163.9L475.6 158.4L475.2 153.2L474.8 148.2L474.4 143.8L474.0 140.0L473.6 136.9L473.3 134.3L473.0 132.2L472.7 130.4L472.4 128.9L472.1 127.6L471.9 126.3L471.6 125.0L471.4 123.7L471.2 122.7L471.0 121.7L470.8 120.9L470.6 120.2L470.5 119.5L470.2 118.8L470.0 118.0L469.7 117.2L469.4 116.3L469.1 115.5L468.8 114.7L468.4 113.9L468.1 113.2L467.8 112.6L467.4 112.0L467.0 111.5L466.6 111.2L466.2 110.9L465.7 110.6L465.3 110.4L464.9 110.3L464.6 110.1L464.4 110.0Z" stroke="#b818b8" stroke-width="1" fill="none"/>
<path d="M457.2 132.0L457.2 132.4L457.3 132.7L457.3 133.0L457.3 133.5L457.4 134.3L457.4 135.6L457.3 137.4L457.2 140.0L457.0 143.5L456.8 147.8L456.5 152.7L456.2 158.0L455.8 163.6L455.5 169.2L455.1 174.8L454.8 180.0L454.5 185.1L454.1 190.2L453.8 195.4L453.5 200.6L453.1 205.7L452.8 210.7L452.4 215.5L452.0 220.0L451.6 224.1L451.1 227.9L450.7 231.3L450.2 234.7L449.7 238.1L449.2 241.7L448.8 245.6L448.4 250.0L448.0 254.9L447.7 260.2L447.4 265.8L447.1 271.6L446.9 277.5L446.6 283.4L446.3 289.3L446.0 295.0L445.7 300.7L445.3 306.4L444.8 312.1L444.4 317.8L444.0 323.5L443.7 329.1L443.5 334.6L443.4 340.0L443.5 345.3L443.6 350.6L443.9 355.8L444.3 360.9L444.7 366.0L445.0 370.8L445.3 375.5L445.6 380.0L445.8 384.3L445.9 388.4L446.1 392.3L446.2 396.1L446.3 399.8L446.4 403.3L446.5 406.7L446.6 410.0L446.7 413.1L446.8 416.0L446.9 418.8L447.1 421.4L447.2 424.0L447.3 426.6L447.4 429.3L447.6 432.0L447.8 434.9L448.0 437.9L448.2 440.9L448.4 443.9L448.6 446.9L448.8 449.8L449.0 452.5L449.2 455.0L449.3 457.3L449.5 459.4L449.6 461.4L449.7 463.3L449.8 465.1L449.9 466.8L450.0 468.4L450.2 470.0L450.4 471.5L450.5 472.9L450.7 474.3L450.9 475.6L451.1 476.8L451.4 477.9L451.7 479.0L452.0 480.0L452.4 481.0L452.8 481.9L453.3 482.7L453.8 483.4L454.3 484.1L454.8 484.8L455.4 485.4L455.9 486.0L456.4 486.5L457.0 487.0L457.6 487.4L458.1 487.8L458.7 488.2L459.3 488.5L459.9 488.7L460.4 489.0L461.0 489.2L461.5 489.4L462.1 489.6L462.7 489.7L463.2 489.8L463.7 489.9L464.1 489.9L464.4 490.0L464.4 490.0L464.7 489.9L465.1 489.9L465.6 489.8L466.1 489.7L466.7 489.6L467.3 489.4L467.8 489.2L468.4 489.0L468.9 488.7L469.5 488.5L470.1 488.2L470.7 487.8L471.2 487.4L471.8 487.0L472.4 486.5L472.9 486.0L473.4 485.4L474.0 484.8L474.5 484.1L475.0 483.4L475.5 482.7L476.0 481.9L476.4 481.0L476.8 480.0L477.1 479.0L477.4 477.9L477.7 476.8L477.9 475.6L478.1 474.3L478.3 472.9L478.4 471.5L478.6 470.0L478.8 468.4L478.9 466.8L479.0 465.1L479.1 463.3L479.2 461.4L479.3 459.4L479.5 457.3L479.6 455.0L479.8 452.5L480.0 449.8L480.2 446.9L480.4 443.9L480.6 440.9L480.8 437.9L481.0 434.9L481.2 432.0L481.4 429.3L481.5 426.6L481.6 424.0L481.7 421.4L481.9 418.8L482.0 416.0L482.1 413.1L482.2 410.0L482.3 406.7L482.4 403.3L482.5 399.8L482.6 396.1L482.7 392.3L482.9 388.4L483.0 384.3L483.2 380.0L483.5 375.5L483.8 370.8L484.1 366.0L484.5 360.9L484.9 355.8L485.2 350.6L485.3 345.3L485.4 340.0L485.3 334.6L485.1 329.1L484.8 323.5L484.4 317.8L484.0 312.1L483.5 306.4L483.1 300.7L482.8 295.0L482.5 289.3L482.2 283.4L481.9 277.5L481.7 271.6L481.4 265.8L481.1 260.2L480.8 254.9L480.4 250.0L480.0 245.6L479.6 241.7L479.1 238.1L478.6 234.7L478.1 231.3L477.7 227.9L477.2 224.1L476.8 220.0L476.4 215.5L476.0 210.7L475.7 205.7L475.3 200.6L475.0 195.4L474.7 190.2L474.3 185.1L474.0 180.0L473.7 174.8L473.3 169.2L473.0 163.6L472.6 158.0L472.3 152.7L472.0 147.8L471.8 143.5L471.6 140.0L471.5 137.4L471.4 135.6L471.4 134.3L471.4 133.5L471.5 133.0L471.5 132.7L471.6 132.4L471.6 132.0" stroke="#c4c4c4" stroke-width="1" fill="none"/>
<circle cx="464.4" cy="122" r="10" stroke="#c8b0c8" stroke-width="1" fill="none"/>
<path d="M464.4 115.5L469.2 115.5M464.4 115.5L469.1 116.3M464.4 115.5L468.9 117.1M464.4 115.5L468.6 117.9M464.4 115.5L468.1 118.6M464.4 115.5L467.5 119.2M464.4 115.5L466.8 119.7M464.4 115.5L466.0 120.0M464.4 115.5L465.2 120.2M464.4 115.5L464.4 120.3M464.4 115.5L463.6 120.2M464.4 115.5L462.8 120.0M464.4 115.5L462.0 119.7M464.4 115.5L461.3 119.2M464.4 115.5L460.7 118.6M464.4 115.5L460.2 117.9M464.4 115.5L459.9 117.1M464.4 115.5L459.7 116.3M464.4 115.5L459.6 115.5M464.4 115.5L459.7 114.7M464.4 115.5L459.9 113.9M464.4 115.5L460.2 113.1M464.4 115.5L460.7 112.4M464.4 115.5L461.3 111.8M464.4 115.5L462.0 111.3M464.4 115.5L462.8 111.0M464.4 115.5L463.6 110.8M464.4 115.5L464.4 110.7M464.4 115.5L465.2 110.8M464.4 115.5L466.0 111.0M464.4 115.5L466.8 111.3M464.4 115.5L467.5 111.8M464.4 115.5L468.1 112.4M464.4 115.5L468.6 113.1M464.4 115.5L468.9 113.9M464.4 115.5L469.1 114.7" stroke="#e020e0" stroke-width="0.7" fill="none"/>
<circle cx="464.4" cy="115.5" r="1.8" fill="#f040f0"/>
<path d="M464.4 122.0L470.4 122.0M464.4 122.0L470.2 123.6M464.4 122.0L469.6 125.0M464.4 122.0L468.6 126.2M464.4 122.0L467.4 127.2M464.4 122.0L466.0 127.8M464.4 122.0L464.4 128.0M464.4 122.0L462.8 127.8M464.4 122.0L461.4 127.2M464.4 122.0L460.2 126.2M464.4 122.0L459.2 125.0M464.4 122.0L458.6 123.6M464.4 122.0L458.4 122.0M464.4 122.0L458.6 120.4M464.4 122.0L459.2 119.0M464.4 122.0L460.2 117.8M464.4 122.0L461.4 116.8M464.4 122.0L462.8 116.2M464.4 122.0L464.4 116.0M464.4 122.0L466.0 116.2M464.4 122.0L467.4 116.8M464.4 122.0L468.6 117.8M464.4 122.0L469.6 119.0M464.4 122.0L470.2 120.4" stroke="#d8c8d8" stroke-width="0.5" fill="none"/>
<circle cx="464.6" cy="122.5" r="1.6" fill="#f0fff0"/>
<g fill="none" stroke="#e818e8" stroke-width="2.2">
<path d="M436.3 292C433 310 426.6 350 426.6 385C426.6 406 428.6 414 432.6 414C436.8 414 437.4 405 437.4 385Z"/>
<path d="M443.8 292C446.5 310 452.6 340 452.6 375C452.6 404 450 414 445.4 414C441 414 439.8 405 440 385Z"/>
</g>
<path d="M439.9 292L438.8 410" stroke="#e81818" stroke-width="1.5" fill="none"/>
<circle cx="434" cy="283" r="2.4" stroke="#901890" stroke-width="1" fill="none"/>
<path d="M434 281L430 275" stroke="#901890" stroke-width="0.8" fill="none"/>
<path d="M443.6 300V289Q443.6 286.4 446.2 286.4H460.7" stroke="#a030a0" stroke-width="1" fill="none"/>
<g fill="none" stroke="#c2c2c2" stroke-width="1">
<path d="M268.8 427.6L282.4 418.5V288.2Q331 285.5 440 291.8Q560 300 644.5 343.3V420L655.8 427.6"/>
<path d="M257.5 427.8H268.8"/><circle cx="254.6" cy="427.8" r="2.9"/>
</g>
<path d="M464.4 326.4L486.9 326.4M464.4 326.4L486.9 330.9M464.4 326.4L486.9 335.7M464.4 326.4L486.9 341.4M464.4 326.4L486.9 348.9M464.4 326.4L484.4 356.4M464.4 326.4L476.8 356.4M464.4 326.4L470.4 356.4M464.4 326.4L464.4 356.4M464.4 326.4L458.4 356.4M464.4 326.4L452.0 356.4M464.4 326.4L444.4 356.4M464.4 326.4L441.9 348.9M464.4 326.4L441.9 341.4M464.4 326.4L441.9 335.7M464.4 326.4L441.9 330.9M464.4 326.4L441.9 326.4M464.4 326.4L441.9 321.9M464.4 326.4L441.9 317.1M464.4 326.4L441.9 311.4M464.4 326.4L441.9 303.9M464.4 326.4L446.4 299.4M464.4 326.4L453.2 299.4M464.4 326.4L459.0 299.4M464.4 326.4L464.4 299.4M464.4 326.4L469.8 299.4M464.4 326.4L475.6 299.4M464.4 326.4L482.4 299.4M464.4 326.4L486.9 303.9M464.4 326.4L486.9 311.4M464.4 326.4L486.9 317.1M464.4 326.4L486.9 321.9" stroke="#c8c8c8" stroke-width="0.75" fill="none"/>
<path d="M464.4 363.3L486.9 363.3M464.4 363.3L486.9 367.8M464.4 363.3L486.9 372.6M464.4 363.3L486.9 378.3M464.4 363.3L486.9 385.8M464.4 363.3L484.4 393.3M464.4 363.3L476.8 393.3M464.4 363.3L470.4 393.3M464.4 363.3L464.4 393.3M464.4 363.3L458.4 393.3M464.4 363.3L452.0 393.3M464.4 363.3L444.4 393.3M464.4 363.3L441.9 385.8M464.4 363.3L441.9 378.3M464.4 363.3L441.9 372.6M464.4 363.3L441.9 367.8M464.4 363.3L441.9 363.3M464.4 363.3L441.9 358.8M464.4 363.3L441.9 354.0M464.4 363.3L441.9 348.3M464.4 363.3L441.9 340.8M464.4 363.3L444.4 333.3M464.4 363.3L452.0 333.3M464.4 363.3L458.4 333.3M464.4 363.3L464.4 333.3M464.4 363.3L470.4 333.3M464.4 363.3L476.8 333.3M464.4 363.3L484.4 333.3M464.4 363.3L486.9 340.8M464.4 363.3L486.9 348.3M464.4 363.3L486.9 354.0M464.4 363.3L486.9 358.8" stroke="#c8c8c8" stroke-width="0.75" fill="none"/>
<circle cx="464.4" cy="326.4" r="7.6" stroke="#d0d0d0" stroke-width="0.7" fill="none"/>
<path d="M464.4 326.4L472.0 326.4M464.4 326.4L472.0 327.1M464.4 326.4L471.9 327.9M464.4 326.4L471.7 328.6M464.4 326.4L471.4 329.3M464.4 326.4L471.1 330.0M464.4 326.4L470.7 330.6M464.4 326.4L470.3 331.2M464.4 326.4L469.8 331.8M464.4 326.4L469.2 332.3M464.4 326.4L468.6 332.7M464.4 326.4L468.0 333.1M464.4 326.4L467.3 333.4M464.4 326.4L466.6 333.7M464.4 326.4L465.9 333.9M464.4 326.4L465.1 334.0M464.4 326.4L464.4 334.0M464.4 326.4L463.7 334.0M464.4 326.4L462.9 333.9M464.4 326.4L462.2 333.7M464.4 326.4L461.5 333.4M464.4 326.4L460.8 333.1M464.4 326.4L460.2 332.7M464.4 326.4L459.6 332.3M464.4 326.4L459.0 331.8M464.4 326.4L458.5 331.2M464.4 326.4L458.1 330.6M464.4 326.4L457.7 330.0M464.4 326.4L457.4 329.3M464.4 326.4L457.1 328.6M464.4 326.4L456.9 327.9M464.4 326.4L456.8 327.1M464.4 326.4L456.8 326.4M464.4 326.4L456.8 325.7M464.4 326.4L456.9 324.9M464.4 326.4L457.1 324.2M464.4 326.4L457.4 323.5M464.4 326.4L457.7 322.8M464.4 326.4L458.1 322.2M464.4 326.4L458.5 321.6M464.4 326.4L459.0 321.0M464.4 326.4L459.6 320.5M464.4 326.4L460.2 320.1M464.4 326.4L460.8 319.7M464.4 326.4L461.5 319.4M464.4 326.4L462.2 319.1M464.4 326.4L462.9 318.9M464.4 326.4L463.7 318.8M464.4 326.4L464.4 318.8M464.4 326.4L465.1 318.8M464.4 326.4L465.9 318.9M464.4 326.4L466.6 319.1M464.4 326.4L467.3 319.4M464.4 326.4L468.0 319.7M464.4 326.4L468.6 320.1M464.4 326.4L469.2 320.5M464.4 326.4L469.8 321.0M464.4 326.4L470.3 321.6M464.4 326.4L470.7 322.2M464.4 326.4L471.1 322.8M464.4 326.4L471.4 323.5M464.4 326.4L471.7 324.2M464.4 326.4L471.9 324.9M464.4 326.4L472.0 325.7" stroke="#c8c8c8" stroke-width="0.4" fill="none"/>
<circle cx="464.4" cy="326.4" r="2.2" fill="#fafafa"/>
<circle cx="464.4" cy="363.3" r="7.6" stroke="#d0d0d0" stroke-width="0.7" fill="none"/>
<path d="M464.4 363.3L472.0 363.3M464.4 363.3L472.0 364.0M464.4 363.3L471.9 364.8M464.4 363.3L471.7 365.5M464.4 363.3L471.4 366.2M464.4 363.3L471.1 366.9M464.4 363.3L470.7 367.5M464.4 363.3L470.3 368.1M464.4 363.3L469.8 368.7M464.4 363.3L469.2 369.2M464.4 363.3L468.6 369.6M464.4 363.3L468.0 370.0M464.4 363.3L467.3 370.3M464.4 363.3L466.6 370.6M464.4 363.3L465.9 370.8M464.4 363.3L465.1 370.9M464.4 363.3L464.4 370.9M464.4 363.3L463.7 370.9M464.4 363.3L462.9 370.8M464.4 363.3L462.2 370.6M464.4 363.3L461.5 370.3M464.4 363.3L460.8 370.0M464.4 363.3L460.2 369.6M464.4 363.3L459.6 369.2M464.4 363.3L459.0 368.7M464.4 363.3L458.5 368.1M464.4 363.3L458.1 367.5M464.4 363.3L457.7 366.9M464.4 363.3L457.4 366.2M464.4 363.3L457.1 365.5M464.4 363.3L456.9 364.8M464.4 363.3L456.8 364.0M464.4 363.3L456.8 363.3M464.4 363.3L456.8 362.6M464.4 363.3L456.9 361.8M464.4 363.3L457.1 361.1M464.4 363.3L457.4 360.4M464.4 363.3L457.7 359.7M464.4 363.3L458.1 359.1M464.4 363.3L458.5 358.5M464.4 363.3L459.0 357.9M464.4 363.3L459.6 357.4M464.4 363.3L460.2 357.0M464.4 363.3L460.8 356.6M464.4 363.3L461.5 356.3M464.4 363.3L462.2 356.0M464.4 363.3L462.9 355.8M464.4 363.3L463.7 355.7M464.4 363.3L464.4 355.7M464.4 363.3L465.1 355.7M464.4 363.3L465.9 355.8M464.4 363.3L466.6 356.0M464.4 363.3L467.3 356.3M464.4 363.3L468.0 356.6M464.4 363.3L468.6 357.0M464.4 363.3L469.2 357.4M464.4 363.3L469.8 357.9M464.4 363.3L470.3 358.5M464.4 363.3L470.7 359.1M464.4 363.3L471.1 359.7M464.4 363.3L471.4 360.4M464.4 363.3L471.7 361.1M464.4 363.3L471.9 361.8M464.4 363.3L472.0 362.6" stroke="#c8c8c8" stroke-width="0.4" fill="none"/>
<circle cx="464.4" cy="363.3" r="2.2" fill="#fafafa"/>
<circle cx="464.4" cy="299.3" r="1.4" stroke="#40a0a0" stroke-width="0.8" fill="none"/>
<path d="M464.4 488.8L477.4 488.8M464.4 488.8L477.2 491.1M464.4 488.8L476.6 493.2M464.4 488.8L475.7 495.3M464.4 488.8L474.4 497.2M464.4 488.8L472.8 498.8M464.4 488.8L470.9 500.1M464.4 488.8L468.8 501.0M464.4 488.8L466.7 501.6M464.4 488.8L464.4 501.8M464.4 488.8L462.1 501.6M464.4 488.8L460.0 501.0M464.4 488.8L457.9 500.1M464.4 488.8L456.0 498.8M464.4 488.8L454.4 497.2M464.4 488.8L453.1 495.3M464.4 488.8L452.2 493.2M464.4 488.8L451.6 491.1M464.4 488.8L451.4 488.8" stroke="#e020e0" stroke-width="0.8" fill="none"/>
<path d="M464.4 488.8L473.4 488.8M464.4 488.8L455.4 488.8M464.4 488.8L455.5 487.2M464.4 488.8L455.9 485.7M464.4 488.8L456.6 484.3M464.4 488.8L457.5 483.0M464.4 488.8L458.6 481.9M464.4 488.8L459.9 481.0M464.4 488.8L461.3 480.3M464.4 488.8L462.8 479.9M464.4 488.8L464.4 479.8M464.4 488.8L466.0 479.9M464.4 488.8L467.5 480.3M464.4 488.8L468.9 481.0M464.4 488.8L470.2 481.9M464.4 488.8L471.3 483.0M464.4 488.8L472.2 484.3M464.4 488.8L472.9 485.7M464.4 488.8L473.3 487.2" stroke="#e020e0" stroke-width="0.8" fill="none"/>
<path d="M464.4 484.0L478.9 484.0M464.4 484.0L449.9 484.0M464.4 484.0L450.2 481.2M464.4 484.0L451.0 478.5M464.4 484.0L452.3 475.9M464.4 484.0L454.1 473.7M464.4 484.0L456.3 471.9M464.4 484.0L458.9 470.6M464.4 484.0L461.6 469.8M464.4 484.0L464.4 469.5M464.4 484.0L467.2 469.8M464.4 484.0L469.9 470.6M464.4 484.0L472.5 471.9M464.4 484.0L474.7 473.7M464.4 484.0L476.5 475.9M464.4 484.0L477.8 478.5M464.4 484.0L478.6 481.2" stroke="#d8c8d8" stroke-width="0.6" fill="none"/>
<circle cx="464.4" cy="489" r="2.6" fill="#f060f0"/>
<circle cx="464.4" cy="471.6" r="2.4" stroke="#d0d0d0" stroke-width="0.8" fill="none"/>
<text x="465.5" y="164.5" font-family="DejaVu Sans,Liberation Sans,sans-serif" font-size="12.4" fill="#2a8c8c">coord_0</text>
<text x="436.5" y="216.3" font-family="DejaVu Sans,Liberation Sans,sans-serif" font-size="12.4" fill="#22c022">coord_0</text>
<text x="438.8" y="434.6" font-family="DejaVu Sans,Liberation Sans,sans-serif" font-size="8" fill="#b020b0">coord_0</text>
<rect x="462.6" y="428" width="9" height="8" fill="#000" opacity="0.0"/><text x="462.8" y="434.7" font-family="DejaVu Sans,Liberation Sans,sans-serif" font-size="8.1" fill="#e4e4e4">coord_0</text>
<text x="462.8" y="486" font-family="DejaVu Sans,Liberation Sans,sans-serif" font-size="4.5" fill="#fff">0</text>
<path d="M598.5 176.5V185.5L600.7 183.6L602.3 187.2L603.7 186.5L602.1 183L604.8 182.8Z" fill="#222" stroke="#e8e8e8" stroke-width="0.8"/>
</svg>
<!-- RIGHT PANELS -->
<svg id="rightsvg" class="a" style="left:872px;top:44px" width="152" height="517" viewBox="872 44 152 517">
<defs>
<g id="eye"><ellipse cx="0" cy="0" rx="3.8" ry="2.7" fill="#0a0a0a"/><path d="M-2.2 0.5Q-1 -1.2 0.2 0.3Q1 1.3 2.3 -0.7" fill="none" stroke="#a0a0a0" stroke-width="0.6"/><path d="M-1.6 1.3Q0 2 1.6 1.2" fill="none" stroke="#707070" stroke-width="0.4"/></g>
<g id="eyeg"><ellipse cx="0" cy="0" rx="3.6" ry="2.3" fill="#d6d6d6" stroke="#9c9c9c" stroke-width="0.7"/><path d="M-2 0.2Q0 -1.4 2 0.2" fill="none" stroke="#a4a4a4" stroke-width="0.5"/></g>
<g id="lock"><path d="M-1.6 0.4V-1.4Q-1.6 -2.9 0 -2.9Q1.6 -2.9 1.6 -1.4V0.4" fill="#fff" stroke="#0c0c0c" stroke-width="1.2"/><rect x="-2.6" y="0" width="5.2" height="3.2" rx="0.4" fill="#0c0c0c"/></g>
<g id="lockg"><path d="M-1.6 0.4V-1.4Q-1.6 -2.9 0 -2.9Q1.6 -2.9 1.6 -1.4V0.4" fill="#f4f4f4" stroke="#c4c4c4" stroke-width="0.9"/><rect x="-2.5" y="-0.2" width="5" height="3.4" rx="0.4" fill="#aeaeae"/></g>
<g id="pen"><path d="M-3.4 3.4L3.2 -3.2" stroke="#d9a94e" stroke-width="1.5" stroke-linecap="round"/><path d="M-3.6 3.6L-2.4 2.4" stroke="#f0e0c0" stroke-width="1.2"/><path d="M2.4 -2.4L3.3 -3.3" stroke="#c8603a" stroke-width="1.5"/></g>
<g id="flt"><rect x="-2.2" y="-1" width="3.4" height="3.2" fill="none" stroke="#222" stroke-width="0.8"/><path d="M-0.8 -1V-2.6H2.6V0.8H1.2" fill="none" stroke="#222" stroke-width="0.8"/></g>
<g id="cls"><path d="M-1.9 -1.9L1.9 1.9M1.9 -1.9L-1.9 1.9" stroke="#111" stroke-width="1.1"/></g>
<linearGradient id="prs" x1="0" y1="0" x2="0" y2="1"><stop offset="0" stop-color="#8f8d8a"/><stop offset="1" stop-color="#c6c3bf"/></linearGradient>
<g id="win"><rect x="0" y="0" width="11" height="10" fill="#f4f4f2" stroke="#777" stroke-width="0.5"/><rect x="0" y="0" width="11" height="2.2" fill="#151515"/></g>
</defs>
<use href="#flt" x="992.3" y="49.8"/><use href="#cls" x="1000.6" y="49.6"/>
<path d="M890.3 55V66M906.5 55V66M923 55V66M939.5 55V66M955.7 55V66M972 55V66M988.3 55V66" stroke="#9a9793" stroke-width="0.8"/>
<path d="M891.1999999999999 55V66M907.4 55V66M923.9 55V66M940.4 55V66M956.6 55V66M972.9 55V66M989.1999999999999 55V66" stroke="#fbfaf9" stroke-width="0.8"/>
<use href="#eye" x="882.4" y="60.6" transform="scale(1)"/>
<use href="#eyeg" x="898.4" y="60.6"/>
<path d="M914.7 57.4V64.4M911.2 60.9H918.2" stroke="#d81b1b" stroke-width="1.7"/>
<path d="M928.4 60.9H934" stroke="#b6b4b1" stroke-width="1.3"/>
<text x="947.6" y="63" text-anchor="middle" font-size="5" fill="#c2c0bd" font-family="DejaVu Sans,Liberation Sans,sans-serif">ab</text><path d="M943.6 63.6H951.6" stroke="#c2c0bd" stroke-width="0.5"/>
<use href="#pen" x="963.6" y="60.8"/>
<path d="M979.4 58H981V63.4" stroke="#d0cdc9" stroke-width="1" fill="none"/>
<rect x="993.6" y="58" width="5.8" height="5.8" rx="0.8" fill="#f6e8dc" stroke="#e8823c" stroke-width="1.3"/>
<rect x="875.5" y="66.5" width="128.3" height="58.5" fill="#fff"/><path d="M875.5 125V66.5" stroke="#8e8c89" stroke-width="0.8" fill="none"/><path d="M1003.9 66.5V125" stroke="#dcd9d5" stroke-width="0.6" fill="none"/>
<path d="M875.2 66.4H1004" stroke="#6e6c6a" stroke-width="0.8"/>
<use href="#eye" x="881.7" y="72.5"/>
<use href="#eye" x="881.7" y="81.0"/>
<use href="#eye" x="881.7" y="89.5"/>
<use href="#eye" x="881.7" y="98.0"/>
<use href="#eye" x="881.7" y="106.5"/>
<use href="#eye" x="881.7" y="115.0"/>
<use href="#eye" x="881.7" y="123.5"/>
<use href="#pen" x="892.4" y="72.3" transform="translate(0 0)"/>
<rect x="994.8" y="67" width="8.8" height="57.7" fill="#f6f5f3"/>
<rect x="995.2" y="69.4" width="8" height="6.9" fill="#eeebe7" stroke="#c4c0ba" stroke-width="0.6"/><path d="M997.4 74H1001L999.2 71.8Z" fill="#222"/>
<rect x="995.2" y="76.4" width="8" height="27.4" fill="#edeae6" stroke="#bcb8b2" stroke-width="0.7"/>
<rect x="995.2" y="117" width="8" height="7.2" fill="#eeebe7" stroke="#c4c0ba" stroke-width="0.6"/><path d="M997.4 119.6H1001L999.2 121.8Z" fill="#222"/>
<rect x="874" y="125.4" width="131" height="3" fill="#efebe7"/>
<use href="#flt" x="992.3" y="132.6"/><use href="#cls" x="1000.6" y="132.4"/>
<path d="M900.4 138.5V150M926.5 138.5V150M952.3 138.5V150M978.4 138.5V150" stroke="#9a9793" stroke-width="0.8"/>
<path d="M901.3 138.5V150M927.4 138.5V150M953.1999999999999 138.5V150M979.3 138.5V150" stroke="#fbfaf9" stroke-width="0.8"/>
<use href="#eye" x="887.6" y="144.6"/><use href="#eyeg" x="913.5" y="144.6"/>
<path d="M939.5 141.2V148.2M936 144.7H943" stroke="#d81b1b" stroke-width="1.7"/>
<path d="M962.4 144.7H968.6" stroke="#d83a4a" stroke-width="1.6"/>
<use href="#pen" x="991.4" y="144.4"/>
<rect x="875.5" y="150.5" width="128.5" height="287" fill="#fff"/><path d="M875.5 437.5V150.5" stroke="#8e8c89" stroke-width="0.8" fill="none"/><path d="M1004.1 150.5V437.5" stroke="#dcd9d5" stroke-width="0.6" fill="none"/>
<path d="M875.2 150.4H1004.2" stroke="#6e6c6a" stroke-width="0.8"/>
<rect x="876" y="211.3" width="127.8" height="7.6" fill="#3a85c6"/>
<use href="#eyeg" x="880.9" y="155.7"/>
<use href="#lockg" x="890.7" y="155.5"/>
<use href="#eyeg" x="880.9" y="164.2"/>
<use href="#lockg" x="890.7" y="164.0"/>
<use href="#eyeg" x="880.9" y="172.8"/>
<use href="#lockg" x="890.7" y="172.6"/>
<use href="#eyeg" x="880.9" y="181.3"/>
<use href="#lockg" x="890.7" y="181.1"/>
<use href="#eye" x="880.9" y="189.8"/>
<use href="#lock" x="890.7" y="189.6"/>
<use href="#eyeg" x="880.9" y="198.3"/>
<use href="#lockg" x="890.7" y="198.2"/>
<use href="#eye" x="880.9" y="206.9"/>
<use href="#lock" x="890.7" y="206.7"/>
<use href="#eyeg" x="880.9" y="215.4" opacity="0.75"/><use href="#lockg" x="890.7" y="215.4" opacity="0.7"/>
<use href="#eyeg" x="880.9" y="223.9"/>
<use href="#lock" x="890.7" y="223.7"/>
<use href="#eyeg" x="880.9" y="232.5"/>
<use href="#lock" x="890.7" y="232.3"/>
<use href="#eyeg" x="880.9" y="241.0"/>
<use href="#lock" x="890.7" y="240.8"/>
<use href="#eyeg" x="880.9" y="249.5"/>
<use href="#lock" x="890.7" y="249.3"/>
<use href="#eyeg" x="880.9" y="258.1"/>
<use href="#lock" x="890.7" y="257.9"/>
<use href="#eyeg" x="880.9" y="266.6"/>
<use href="#lock" x="890.7" y="266.4"/>
<use href="#eyeg" x="880.9" y="275.1"/>
<use href="#lock" x="890.7" y="274.9"/>
<use href="#eye" x="880.9" y="283.6"/>
<use href="#lock" x="890.7" y="283.4"/>
<use href="#eye" x="880.9" y="292.2"/>
<use href="#lock" x="890.7" y="292.0"/>
<use href="#eye" x="880.9" y="300.7"/>
<use href="#lock" x="890.7" y="300.5"/>
<use href="#eye" x="880.9" y="309.2"/>
<use href="#lock" x="890.7" y="309.0"/>
<use href="#eye" x="880.9" y="317.8"/>
<use href="#lock" x="890.7" y="317.6"/>
<use href="#eye" x="880.9" y="326.3"/>
<use href="#lock" x="890.7" y="326.1"/>
<use href="#eye" x="880.9" y="334.8"/>
<use href="#lock" x="890.7" y="334.6"/>
<use href="#eye" x="880.9" y="343.4"/>
<use href="#lock" x="890.7" y="343.2"/>
<use href="#flt" x="992.3" y="445.2"/><use href="#cls" x="1000.6" y="445"/>
<rect x="875.5" y="451.6" width="128" height="71.6" fill="#fff"/><path d="M875.5 536.8V451.6" stroke="#8e8c89" stroke-width="0.8" fill="none"/>
<path d="M875.2 451.5H1003.8" stroke="#6e6c6a" stroke-width="0.8"/>
<rect x="875.5" y="523.6" width="128" height="13.2" fill="#fff"/>
<path d="M875.5 523.4H1003.5" stroke="#b8b6b3" stroke-width="0.6"/>
<rect x="992.2" y="525.2" width="10.8" height="10.4" fill="#f4f2ef" stroke="#b4b1ad" stroke-width="0.6"/>
<rect x="994.6" y="528.6" width="6.8" height="5" fill="#fff" stroke="#333" stroke-width="0.6"/><rect x="994.6" y="528.4" width="6.8" height="1.5" fill="#111"/>
<path d="M1005.3 44.5V538" stroke="#d8d4ce" stroke-width="0.7"/>
<path d="M1007 47.5H1021M1007 49.2H1021" stroke="#c9c4be" stroke-width="0.7"/>
<rect x="1006.3" y="51.4" width="15.6" height="14" fill="url(#prs)" stroke="#8a8886" stroke-width="0.5"/>
<rect x="1006.3" y="66.6" width="15.6" height="14" fill="url(#prs)" stroke="#8a8886" stroke-width="0.5"/>
<rect x="1006.3" y="119.4" width="15.6" height="14" fill="url(#prs)" stroke="#8a8886" stroke-width="0.5"/>
<use href="#win" x="1008.6" y="53.8"/><rect x="1011" y="57.6" width="6" height="3.6" rx="1" fill="none" stroke="#555" stroke-width="0.6" transform="rotate(-20 1014 59.4)"/>
<use href="#win" x="1008.6" y="69"/><rect x="1011" y="73" width="4" height="3" fill="none" stroke="#888" stroke-width="0.5"/><rect x="1013" y="74.4" width="4" height="3" fill="none" stroke="#888" stroke-width="0.5"/>
<use href="#win" x="1008.6" y="86.8"/><path d="M1010 91H1011.4M1010 93.2H1011.4M1010 95.4H1011.4" stroke="#333" stroke-width="1"/><path d="M1012.6 91H1018.6M1012.6 93.2H1018.6M1012.6 95.4H1018.6" stroke="#c0beba" stroke-width="1"/>
<use href="#win" x="1008.6" y="103.2"/><rect x="1013" y="107.4" width="4" height="3.8" fill="#999"/><path d="M1010.4 109.4H1012.4" stroke="#555" stroke-width="0.7"/>
<use href="#win" x="1008.6" y="121.6"/><path d="M1011.6 124V131.4M1008.8 126.6H1019.4" stroke="#bbb" stroke-width="0.5"/>
<rect x="1022" y="44" width="2" height="517" fill="#3a3a3a"/>
<path d="M1022 556L1017 561M1022 558.4L1019.4 561" stroke="#b8b4ae" stroke-width="0.8"/>
</svg>
<div class="t" style="left:875.6px;top:46.6px;font-size:6.4px">Block List</div>
<div class="t" style="left:875.6px;top:129.6px;font-size:6.4px">Layer List</div>
<div class="t" style="left:875.6px;top:441.8px;font-size:6.4px">Script Shell</div>
<div class="a" style="left:876px;top:67px;width:118px;height:58px;overflow:hidden">
<div class="t" style="left:24.8px;top:2.3px;font-size:6.35px">*Model_Space</div>
<div class="t" style="left:24.8px;top:10.8px;font-size:6.35px">airfoil</div>
<div class="t" style="left:24.8px;top:19.3px;font-size:6.35px">airfoil-0</div>
<div class="t" style="left:24.8px;top:27.8px;font-size:6.35px">fus2</div>
<div class="t" style="left:24.8px;top:36.3px;font-size:6.35px">fus_core</div>
<div class="t" style="left:24.8px;top:44.8px;font-size:6.35px">*Paper_Space</div>
<div class="t" style="left:24.8px;top:53.3px;font-size:6.35px">*Paper_Space0</div>
</div>
<div class="t" style="left:897.6px;top:152.5px;font-size:6.35px">~0230</div>
<div class="t" style="left:897.6px;top:161.0px;font-size:6.35px">~bat</div>
<div class="t" style="left:897.6px;top:169.6px;font-size:6.35px">~cut_099_(split)</div>
<div class="t" style="left:897.6px;top:178.1px;font-size:6.35px">~servo_slot</div>
<div class="t" style="left:897.6px;top:186.6px;font-size:6.35px">~side</div>
<div class="t" style="left:897.6px;top:195.2px;font-size:6.35px">~spit_range</div>
<div class="t" style="left:897.6px;top:203.7px;font-size:6.35px">~top</div>
<div class="t" style="left:897.6px;top:212.2px;font-size:6.35px;color:#fff">0</div>
<div class="t" style="left:897.6px;top:220.7px;font-size:6.35px">fus_01_00</div>
<div class="t" style="left:897.6px;top:229.3px;font-size:6.35px">fus_01_10</div>
<div class="t" style="left:897.6px;top:237.8px;font-size:6.35px">fus_01_11</div>
<div class="t" style="left:897.6px;top:246.3px;font-size:6.35px">fus_01_12</div>
<div class="t" style="left:897.6px;top:254.9px;font-size:6.35px">fus_01_13</div>
<div class="t" style="left:897.6px;top:263.4px;font-size:6.35px">fus_01_99</div>
<div class="t" style="left:897.6px;top:271.9px;font-size:6.35px">fus_01_spin</div>
<div class="t" style="left:897.6px;top:280.4px;font-size:6.35px">prof_010_(rudder_slot)</div>
<div class="t" style="left:897.6px;top:289.0px;font-size:6.35px">prof_011_(outer_profile)</div>
<div class="t" style="left:897.6px;top:297.5px;font-size:6.35px">prof_012_(side_strip)</div>
<div class="t" style="left:897.6px;top:306.0px;font-size:6.35px">prof_013_(inner_profile)</div>
<div class="t" style="left:897.6px;top:314.6px;font-size:6.35px">prof_020_(elevator)</div>
<div class="t" style="left:897.6px;top:323.1px;font-size:6.35px">prof_030_(rudder)</div>
<div class="t" style="left:897.6px;top:331.6px;font-size:6.35px">prof_040_(wing_contour)</div>
<div class="t" style="left:897.6px;top:340.2px;font-size:6.35px">prof_041_(wing_profile)</div>
<div class="t" style="left:877.6px;top:526.2px;font-size:6.35px">&gt;</div>
<!-- STATUS BAR -->
<div class="a" style="left:1.5px;top:538px;width:1021px;height:1px;background:#d9d5cf"></div>
<div class="a" style="left:173.4px;top:540px;width:1px;height:21px;background:#d2cec8"></div>
<div class="t" style="left:3px;top:541.4px;font-size:6.4px">111.98,254.38</div>
<div class="t" style="left:3px;top:552.4px;font-size:6.4px">@111.98,254.38</div>
<div class="t" style="left:175.6px;top:541.4px;font-size:6.4px">277.94&lt;66°</div>
<div class="t" style="left:175.6px;top:552.4px;font-size:6.4px">@277.94&lt;66°</div>
<div class="t" style="left:410.6px;top:545.8px;font-size:6.4px">Select entity or region</div>
<div class="t" style="left:645px;top:545.8px;font-size:6.4px">No entities selected.</div>
<svg class="a" style="left:484px;top:540px" width="18" height="18" viewBox="484 540 18 18">
<ellipse cx="493" cy="549.4" rx="4.6" ry="6.2" fill="#fafafa" stroke="#c8c6c3" stroke-width="0.7" transform="rotate(-25 493 549.4)"/>
<path d="M488.6 545.2Q490 542.6 493.2 542.4L493.4 546.2Q491 546.4 489.6 547.6Z" fill="#9a9896" opacity="0.8"/>
</svg>
</body></html>
